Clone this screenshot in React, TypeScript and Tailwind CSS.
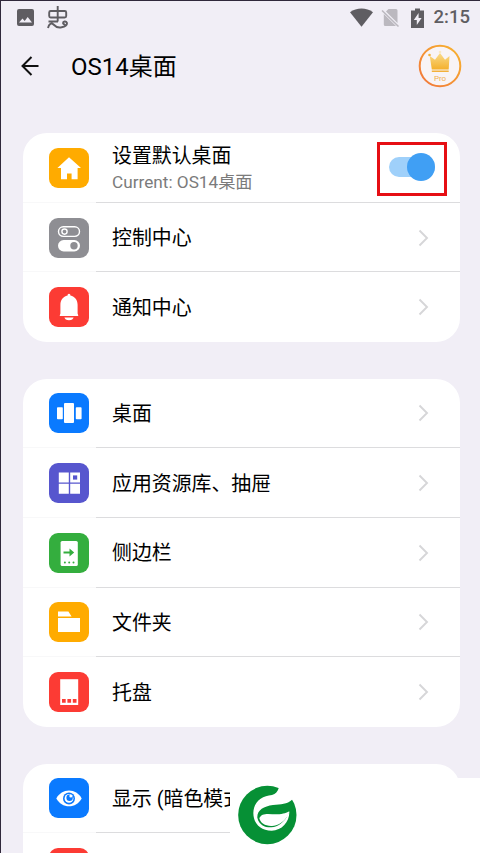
import React from 'react';

interface RowProps {
    icon: React.ReactNode;
    color: string;
    title: string;
    subtitle?: string;
    last?: boolean;
    children?: React.ReactNode;
}

const Chevron = () => (
    <svg className="w-3 h-[18px]" viewBox="0 0 12 18" fill="none" stroke="#d6d6d8" strokeWidth="1.9">
        <path d="M1.5 1.5 9 9l-7.5 7.5" />
    </svg>
);

const Row: React.FC<RowProps> = ({ icon, color, title, subtitle, last, children }) => (
    <div className="relative flex h-[69.7px] shrink-0 items-center pl-[26px]">
        <div className={`h-10 w-10 shrink-0 rounded-[9px] ${color}`}>
            <svg className="h-10 w-10" viewBox="0 0 40 40" fill="#fff">{icon}</svg>
        </div>
        <div className="ml-[23px] flex flex-1 flex-col whitespace-nowrap pt-[3px]">
            <span className="text-[19.9px] leading-[26px] text-black">{title}</span>
            {subtitle && <span className="text-[17.2px] leading-[24px] text-[#7b7b7b]">{subtitle}</span>}
        </div>
        {children || <div className="mr-[30px]"><Chevron /></div>}
        {!last && <div className="absolute bottom-0 left-[73px] right-0 h-px bg-[#dcdcde]" />}
        {!last && <div className="absolute bottom-0 left-0 h-px w-[73px] bg-[#f8f8f9]" />}
    </div>
);

const HomeIcon = <path d="M20 9.2 8.4 20H12v11.2h6v-5.8h4.6v5.8h6V20H32z" />;

const ControlIcon = (
    <>
        <rect x="9.5" y="8.8" width="21" height="9.6" rx="4.8" fill="none" stroke="#fff" strokeWidth="1.4" />
        <circle cx="15.5" cy="13.6" r="2.6" fill="none" stroke="#fff" strokeWidth="1.4" />
        <rect x="9" y="22" width="22" height="11.4" rx="5.7" />
        <circle cx="25" cy="27.7" r="3.7" fill="#8e8e93" />
    </>
);

const BellIcon = (
    <>
        <path d="M20 6.8c1 0 1.4.7 1.4 1.8 4.6 1.1 7.2 4.7 7.2 9.2v8.6l.6 1.8v.8H10.800v-.8l.6-1.800v-8.600c0-4.500 2.600-8.100 7.200-9.200 0-1.100.4-1.800 1.400-1.800z" />
        <path d="M15.4 30.5h9.2c-.5 1.6-1.8 2.7-4.6 2.7s-4.1-1.1-4.6-2.7z" />
    </>
);

const DesktopIcon = (
    <>
        <rect x="8" y="14.2" width="5.8" height="12" rx=".8" />
        <rect x="15" y="10" width="10" height="20" rx="1" />
        <rect x="26.8" y="14.2" width="5.8" height="12" rx=".8" />
    </>
);

const LibraryIcon = (
    <>
        <path d="M9.8 9.5h10v10h-10zM21.2 9.5h9.8v10h-9.8zM9.8 20.8h10v10h-10zM21.2 20.8h9.8v10h-9.8z" />
        <path fill="#5756ce" d="M24 12.4h4.2v4.2H24z" />
    </>
);

const SidebarIcon = (
    <>
        <rect x="11.6" y="8" width="17.2" height="25" rx="1.6" />
        <g fill="#34ae3e">
            <path d="M14.500 18.600h6v-3.100l4.700 4-4.700 4v-3.100h-6z" />
            <circle cx="15.9" cy="29.5" r="1" />
            <circle cx="20.2" cy="29.5" r="1" />
            <circle cx="24.5" cy="29.5" r="1" />
        </g>
    </>
);

const FolderIcon = <path d="M9 9.4h10.4l3.2 5.2H9zM9 16.1h22V30H9z" />;

const TrayIcon = (
    <>
        <path d="M11.2 7.2h18V33h-18z" />
        <path fill="#fb3b34" d="M13 27h3.7v3.7H13zM18.4 27h3.7v3.7h-3.7zM23.8 27h3.7v3.7h-3.7z" />
    </>
);

const EyeIcon = (
    <>
        <path d="M7.300 20.400c2.900-5 7.400-7.900 12.700-7.900s9.800 2.900 12.700 7.900c-2.900 5-7.400 7.900-12.700 7.900s-9.800-2.900-12.700-7.900z" />
        <circle cx="20" cy="20.4" r="6" fill="#0a7aff" />
        <circle cx="20" cy="20.4" r="4.400" />
        <circle cx="20.600" cy="19.800" r="3.200" fill="#0a7aff" />
        <circle cx="21.800" cy="18" r="1.500" />
    </>
);

const StatusBar = () => (
    <div className="flex h-[33px] shrink-0 items-center justify-between pl-4 pr-2.5 text-[#5f5d62]">
        <div className="flex items-center gap-[13px]">
            <svg className="h-[17px] w-[17px]" viewBox="0 0 17 17" fill="currentColor">
                <path fillRule="evenodd" d="M2 0h13a2 2 0 0 1 2 2v13a2 2 0 0 1-2 2H2a2 2 0 0 1-2-2V2a2 2 0 0 1 2-2zM2 13.5h13l-4.3-5.4-3 3.9L5.500 9.500z" />
            </svg>
            <svg className="h-[23px] w-[22px]" viewBox="0 0 22 23" fill="none" stroke="currentColor" strokeWidth="1.9">
                <rect x="2.2" y="5" width="17" height="6.5" rx="1.5" />
                <path d="M10.700 0v15.500M1.500 15.500H11M1 22c1-4.500 3.500-5.500 5.500-3.500 2.500 2.700 5 3.600 8 2.800 4-.8 6-2.600 5.300-4.700-.7-1.800-4-1.400-3.700.7.200 1 1.400 1.300 2.100.6" />
            </svg>
        </div>
        <div className="flex items-center">
            <svg className="h-[19px] w-[23px]" viewBox="0 0 23 19" fill="currentColor">
                <path d="M0 4.2C6.5-.8 16.500-.8 23 4.200L11.500 18.700z" />
            </svg>
            <svg className="ml-2 h-[19px] w-[19px]" viewBox="0 0 19 19">
                <path fill="#bbb8bf" d="M7.5 1H15a1.5 1.5 0 0 1 1.5 1.5V15L5 3.400zM2.800 6 15 18H4.300a1.500 1.500 0 0 1-1.500-1.500z" />
                <path stroke="#bbb8bf" strokeWidth="1.5" d="M1 2.500 17.500 18.500" />
            </svg>
            <svg className="ml-[11px] h-5 w-[13px]" viewBox="0 0 13 20" fill="currentColor">
                <path d="M4 .5h5v2h4V20H0V2.500h4z" />
                <path fill="#f1eef6" d="M7.600 5 2.800 12h3v5l4.800-7h-3z" />
            </svg>
            <span className="ml-[10px] text-[18.5px] font-medium leading-none">2:15</span>
        </div>
    </div>
);

const ProBadge = () => (
    <svg className="h-11 w-11" viewBox="0 0 44 44">
        <defs>
            <linearGradient id="ring" x1="0" y1="1" x2="1" y2="0">
                <stop offset="0" stopColor="#f1743a" />
                <stop offset="1" stopColor="#f8b52f" />
            </linearGradient>
            <linearGradient id="crown" x1="0" y1="0" x2="0" y2="1">
                <stop offset="0" stopColor="#f9dc8c" />
                <stop offset="1" stopColor="#f4b02c" />
            </linearGradient>
        </defs>
        <circle cx="22" cy="22" r="20.3" fill="#f8f4f6" stroke="url(#ring)" strokeWidth="2" />
        <path fill="url(#crown)" d="m11.800 12 5.200 3.800 5-6.800 5 6.800 4.500-3.800-.8 13.500H13.800z" />
        <path fill="#f3b13a" d="M13.800 26.500h16.900V28H13.800z" />
        <circle cx="11.5" cy="11" r="1.300" fill="#f3b13a" />
        <circle cx="22" cy="8" r="1.300" fill="#f9e9c4" />
        <text x="22" y="37" textAnchor="middle" fontSize="8" fill="#f0b052">Pro</text>
    </svg>
);

const LeafLogo = () => (
    <svg className="h-[60px] w-[60px]" viewBox="0 0 180 180">
        <circle cx="91" cy="90" r="87.500" fill="#069035" />
        <path fill="#fff" d="M127 0 175 30 165 44C150 58 132 57 108 60C80 64 60 75 61 98C66 120 85 128 103 127C125 124 138 112 148 98L157 80C158 110 135 137 104 137C70 137 49 115 49 84C50 50 75 32 105 30C116 28 122 20 125 10Z" />
        <path fill="#fff" d="M67 100C75 82 95 88 120 88C140 88 150 82 157 79C155 90 152 96 148 98C138 112 122 122 105 123C85 124 70 114 67 100Z" />
    </svg>
);

export default function App() {
    return (
        <div className="relative flex h-[853px] w-[480px] flex-col overflow-hidden border-l border-t border-[#30283b] bg-[#f1eef6] font-['Roboto','Noto_Sans_CJK_SC',sans-serif]">
            <StatusBar />
            <header className="flex h-[63px] shrink-0 items-center pl-5 pr-[18px]">
                <svg className="h-5 w-[18px]" viewBox="0 0 18 20" fill="none" stroke="#111" strokeWidth="2">
                    <path d="M17.5 10H2M10.500 1 1.500 10l9 9" />
                </svg>
                <h1 className="ml-[32px] flex-1 pt-[2px] text-[24px] leading-8 text-black">OS14桌面</h1>
                <ProBadge />
            </header>

            <main className="flex shrink-0 flex-col gap-[36.5px] pl-[22px] pr-5 pt-9">
                <section className="rounded-[24px] bg-white">
                    <Row icon={HomeIcon} color="bg-[#ffab00]" title="设置默认桌面" subtitle="Current: OS14桌面">
                        <div className="mr-[13px] mt-0.5 flex h-[54px] w-[70px] items-center border-[3px] border-[#e60f14] pb-[3px] pl-[9px]">
                            <div className="flex h-5 w-[46px] items-center justify-end rounded-full bg-[#9fd0fa]">
                                <div className="h-7 w-7 shrink-0 rounded-full bg-[#409ff4]" />
                            </div>
                        </div>
                    </Row>
                    <Row icon={ControlIcon} color="bg-[#8e8e93]" title="控制中心" />
                    <Row icon={BellIcon} color="bg-[#fc3b34]" title="通知中心" last />
                </section>

                <section className="rounded-[24px] bg-white">
                    <Row icon={DesktopIcon} color="bg-[#0a7aff]" title="桌面" />
                    <Row icon={LibraryIcon} color="bg-[#5756ce]" title="应用资源库、抽屉" />
                    <Row icon={SidebarIcon} color="bg-[#34ae3e]" title="侧边栏" />
                    <Row icon={FolderIcon} color="bg-[#ffab00]" title="文件夹" />
                    <Row icon={TrayIcon} color="bg-[#fc3b34]" title="托盘" last />
                </section>

                <section className="rounded-t-[24px] bg-white">
                    <Row icon={EyeIcon} color="bg-[#0a7aff]" title="显示 (暗色模式)" />
                    <Row icon={null} color="bg-[#fc3b34]" title="" last />
                </section>
            </main>

            {/* watermark covering the lower right corner */}
            <div className="absolute bottom-0 right-0 flex h-[75px] w-[250px] items-start bg-white pl-[7px] pt-[7px]">
                <LeafLogo />
            </div>
        </div>
    );
}
